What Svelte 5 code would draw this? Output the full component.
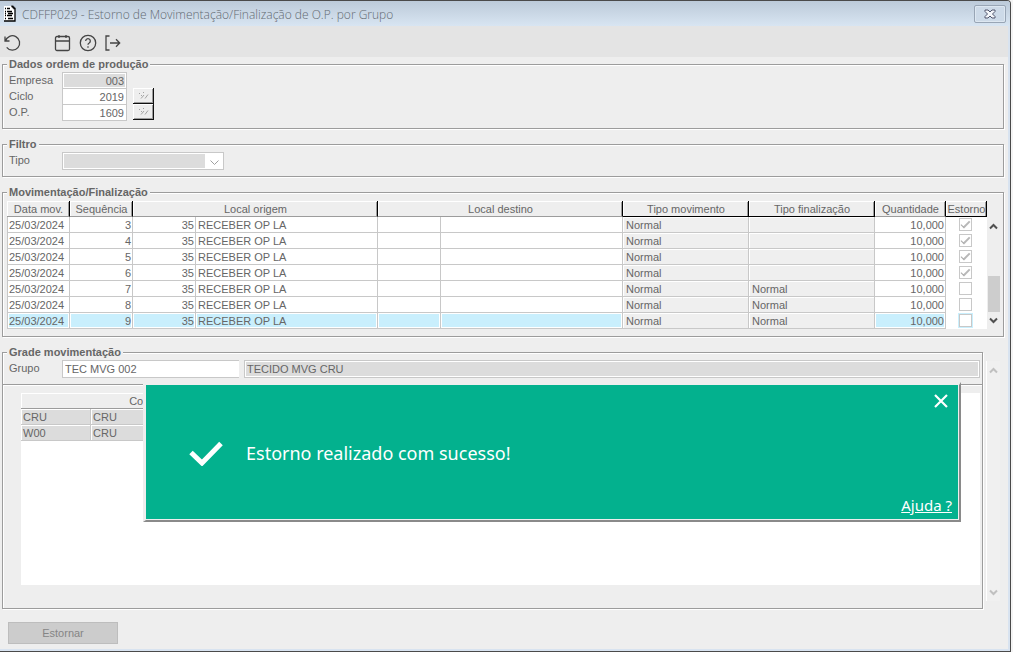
<!--
  App.svelte -- Estorno de Movimentação/Finalização de O.P. por Grupo.

  Order data, filter, movement list and the group grid, with the result
  notice on top of the grid.
-->
<script lang="ts">
  interface Movement {
    date: string;
    seq: number;
    originCode: string;
    origin: string;
    movement: string;
    ending: string;
    quantity: string;
    reversed: boolean;
  }

  const BASE = {
    date: '25/03/2024',
    originCode: '35',
    origin: 'RECEBER OP LA',
    movement: 'Normal',
    quantity: '10,000',
  };

  let movements: Movement[] = $state(
    [3, 4, 5, 6, 7, 8, 9].map((seq) => ({
      ...BASE,
      seq,
      ending: seq > 6 ? 'Normal' : '',
      reversed: seq < 7,
    }))
  );

  const COLORS = [
    { code: 'CRU', name: 'CRU' },
    { code: 'W00', name: 'CRU' },
  ];

  let selected = $state(9);
  let noticeOpen = $state(true);
  let company = $state('003');
  let cycle = $state('2019');
  let order = $state('1609');
  let group = $state('TEC MVG 002');
  let groupName = $state('TECIDO MVG CRU');
</script>

{#snippet chevron(down: boolean)}
  <svg class="chevron" class:down viewBox="0 0 9 7" width="9" height="7" aria-hidden="true">
    <path d="M1 5.5 4.500 2 8 5.500" fill="none" stroke="currentColor" stroke-width="2" />
  </svg>
{/snippet}

{#snippet lookup(label: string)}
  <button class="lookup" aria-label={label}>
    <svg viewBox="0 0 12 8" width="12" height="8" aria-hidden="true">
      <path
        d="M2 1.500h1M4 3.500h1M6 .5h1M4 6.500 7 3M8 6.500l3-4"
        fill="none"
        stroke="#a4a4a4"
        stroke-width="1"
      />
    </svg>
  </button>
{/snippet}

<main class="window">
  <header class="titlebar">
    <svg class="doc" viewBox="0 0 14 17" width="14" height="17" aria-hidden="true">
      <path d="M1 1h8l3 3v12H1z" fill="#fff" />
      <path d="M9 .5v1h1v1h1v1h1v12.500H1" fill="none" stroke="#000" stroke-width="1.300" />
      <path
        d="M2 3.500h1M4 3.500h3M2 6.500h1M4 6.500h5M2 8.500h1M5 8.500h5M2 10.500h1M4 10.500h5M2 13.500h1M5 13.500h5"
        stroke="#000"
        stroke-width="1.300"
      />
    </svg>
    <h1>CDFFP029 - Estorno de Movimentação/Finalização de O.P. por Grupo</h1>
    <button class="win-close" aria-label="Fechar janela">
      <svg viewBox="0 0 12 10" width="12" height="10" aria-hidden="true">
        <path
          d="M1 1h3l2 2 2-2h3v1.500L8.500 5 11 7.500V9H8L6 7 4 9H1V7.500L3.500 5 1 2.500z"
          fill="#f4f6fa"
          stroke="#50556c"
        />
      </svg>
    </button>
  </header>

  <nav class="toolbar">
    <button aria-label="Desfazer" class="undo">
      <svg viewBox="0 0 18 18" width="18" height="18">
        <path d="M1 2.500V7h4.500M1.500 7A7.200 7.200 0 1 1 2.700 13.300" />
      </svg>
    </button>
    <button aria-label="Calendário">
      <svg viewBox="0 0 18 18" width="18" height="18">
        <rect x="1.500" y="2.500" width="14" height="14" rx="1.500" />
        <path d="M1.500 7h14M5 1v3M12 1v3" />
      </svg>
    </button>
    <button aria-label="Ajuda">
      <svg viewBox="0 0 18 18" width="18" height="18">
        <circle cx="9" cy="9" r="7.700" />
        <path d="M6.700 7a2.300 2.300 0 1 1 3.500 2C9.300 9.500 9 9.900 9 10.700M9 12.300v1.400" />
      </svg>
    </button>
    <button aria-label="Sair">
      <svg viewBox="0 0 18 18" width="18" height="18">
        <path d="M5.500 2H2v14H5.500M6 9h10M12 5.300 15.700 9l-3.700 3.700" />
      </svg>
    </button>
  </nav>

  <div class="content">
    <fieldset class="order">
      <legend>Dados ordem de produção</legend>
      <div class="field">
        <label for="company">Empresa</label>
        <input id="company" class="num" bind:value={company} readonly />
      </div>
      <div class="field">
        <label for="cycle">Ciclo</label>
        <input id="cycle" class="num" bind:value={cycle} />
        {@render lookup('Pesquisar ciclo')}
      </div>
      <div class="field">
        <label for="order">O.P.</label>
        <input id="order" class="num" bind:value={order} />
        {@render lookup('Pesquisar O.P.')}
      </div>
    </fieldset>

    <fieldset class="filter">
      <legend>Filtro</legend>
      <div class="field">
        <label for="type">Tipo</label>
        <div class="select">
          <select id="type"><option value=""></option></select>
          <svg viewBox="0 0 9 6" width="9" height="6" aria-hidden="true">
            <path d="M0.500 0.500 4.500 4.500l4-4" fill="none" stroke="#a0a0a0" />
          </svg>
        </div>
      </div>
    </fieldset>

    <fieldset class="moves">
      <legend>Movimentação/Finalização</legend>
      <div class="list">
        <table>
          <colgroup>
            <col class="w-code" /><col class="w-code" />
            <col class="w-code" /><col />
            <col class="w-code" /><col />
            <col class="w-type" /><col class="w-type" />
            <col class="w-qty" /><col class="w-check" />
          </colgroup>
          <thead>
            <tr>
              <th>Data mov.</th>
              <th>Sequência</th>
              <th colspan="2">Local origem</th>
              <th colspan="2">Local destino</th>
              <th class="strong">Tipo movimento</th>
              <th class="strong">Tipo finalização</th>
              <th>Quantidade</th>
              <th class="strong">Estorno</th>
            </tr>
          </thead>
          <tbody>
            {#each movements as row (row.seq)}
              <tr class:selected={row.seq === selected} onclick={() => (selected = row.seq)}>
                <td class="first">{row.date}</td>
                <td class="right">{row.seq}</td>
                <td class="right">{row.originCode}</td>
                <td>{row.origin}</td>
                <td></td>
                <td></td>
                <td class="locked">{row.movement}</td>
                <td class="locked">{row.ending}</td>
                <td class="right">{row.quantity}</td>
                <td class="check">
                  <input
                    type="checkbox"
                    aria-label="Estorno {row.seq}"
                    bind:checked={row.reversed}
                  />
                </td>
              </tr>
            {/each}
          </tbody>
        </table>
        <div class="scroll dark">
          {@render chevron(false)}
          <span class="thumb"></span>
          {@render chevron(true)}
        </div>
      </div>
    </fieldset>

    <section class="grade-area">
      <fieldset class="grade">
        <legend>Grade movimentação</legend>
        <div class="field group">
          <label for="group">Grupo</label>
          <input id="group" class="code" bind:value={group} />
          <input class="name" aria-label="Descrição do grupo" bind:value={groupName} readonly />
        </div>
        <div class="sheet">
          <table class="colors">
            <thead>
              <tr><th colspan="2">Cor</th></tr>
            </thead>
            <tbody>
              {#each COLORS as color}
                <tr>
                  <td>{color.code}</td>
                  <td>{color.name}</td>
                </tr>
              {/each}
            </tbody>
          </table>
        </div>
      </fieldset>
      <div class="scroll pale">
        {@render chevron(false)}
        {@render chevron(true)}
      </div>

      {#if noticeOpen}
        <div class="notice" role="alert">
          <button class="dismiss" aria-label="Fechar" onclick={() => (noticeOpen = false)}>
            <svg viewBox="0 0 14 14" width="14" height="14" aria-hidden="true">
              <path d="M1 1l12 12M13 1 1 13" stroke="#fff" stroke-width="2.200" />
            </svg>
          </button>
          <div class="message">
            <svg viewBox="0 0 34 26" width="34" height="26" aria-hidden="true">
              <path d="M2 12.500 13 23 32 3.500" fill="none" stroke="#fff" stroke-width="5" />
            </svg>
            <p>Estorno realizado com sucesso!</p>
          </div>
          <a class="help" href="#ajuda">Ajuda ?</a>
        </div>
      {/if}
    </section>

    <button class="btn-main" disabled>Estornar</button>
  </div>
</main>

<style>
  :global(body) {
    background: #f4f4f4;
  }

  .window {
    box-sizing: border-box;
    display: flex;
    flex-direction: column;
    min-height: 100vh;
    margin-right: 2px;
    border: 1px solid #4a4a4a;
    border-left: 0;
    border-top-right-radius: 4px;
    background: #eee;
    box-shadow: inset -2px -2px 0 #d8e3f0;
    font-family: 'Liberation Sans', Arial, sans-serif;
    font-size: 11px;
    line-height: 13px;
    color: #666;
    --line: #c8c8c8;
    --edge: #9c9c9c;
  }

  button,
  input,
  select {
    box-sizing: border-box;
    margin: 0;
    padding: 0;
    border: 0;
    border-radius: 0;
    font: inherit;
    color: inherit;
  }

  .titlebar {
    display: flex;
    align-items: center;
    height: 25px;
    padding: 0 4px 0 3px;
    border-top-right-radius: 3px;
    background: linear-gradient(#bccad9, #d8e5f2);
  }

  h1 {
    flex: 1;
    margin: 2px 0 0 5px;
    font-family: 'Open Sans', 'Noto Sans', sans-serif;
    font-size: 12px;
    font-weight: 300;
    line-height: 16px;
    color: #636a72;
  }

  .win-close {
    display: grid;
    place-items: center;
    width: 32px;
    height: 18px;
    border: 1px solid #98a5b5;
    border-radius: 2px;
    background: #cddae8;
    box-shadow: inset 0 0 0 1px #dde7f1;
  }

  .toolbar {
    display: flex;
    align-items: center;
    gap: 7px;
    height: 31px;
    margin-right: 2px;
    padding: 3px 4px 0;
    box-sizing: border-box;
    background: #e4e4e4;
  }

  .toolbar button {
    display: flex;
    background: none;
  }

  .toolbar .undo {
    margin-right: 25px;
  }

  .toolbar svg {
    fill: none;
    stroke: #444;
    stroke-width: 1.3;
  }

  .content {
    flex: 1;
    display: flex;
    flex-direction: column;
    gap: 9px;
    padding: 1px 6px 7px 2px;
  }

  fieldset {
    box-sizing: border-box;
    min-width: 0;
    margin: 0;
    padding: 0;
    border: 1px solid var(--edge);
    box-shadow: 1px 1px 0 #fff, inset 1px 1px 0 #fff;
  }

  legend {
    margin-left: 4px;
    padding: 0 2px;
    background: #eee;
    font-weight: 700;
    font-size: 11px;
    line-height: 13px;
  }

  .field {
    display: flex;
    height: 16px;
    padding-left: 6px;
  }

  .field label {
    width: 53px;
    padding-top: 2px;
  }

  .field input {
    height: 17px;
    padding: 1px 2px 0;
    border: 1px solid var(--line);
    background: #fff;
  }

  .field input:read-only {
    background: #dcdcdc;
    box-shadow: inset 0 0 0 1px #fff;
  }

  .num {
    width: 65px;
    text-align: right;
  }

  .order {
    padding: 1px 0 8px;
  }

  .lookup {
    display: grid;
    place-items: center;
    width: 21px;
    height: 16px;
    margin-left: 6px;
    border-right: 1px solid #111;
    border-bottom: 1px solid #111;
    background: #eee;
    box-shadow: inset 1px 1px 0 #fff, inset -1px -1px 0 var(--edge);
  }

  .filter {
    padding: 1px 0 8px;
  }

  .select {
    position: relative;
    width: 162px;
    height: 18px;
  }

  .select select {
    appearance: none;
    width: 100%;
    height: 100%;
    border: 1px solid var(--line);
    background: linear-gradient(#dcdcdc, #dcdcdc) 1px 1px / 141px 14px no-repeat #fff;
  }

  .select svg {
    position: absolute;
    right: 5px;
    top: 8px;
    pointer-events: none;
  }

  .moves {
    padding: 2px 0 7px;
  }

  .list {
    display: flex;
    margin: 0 3px 0 4px;
  }

  table {
    table-layout: fixed;
    border-spacing: 0;
  }

  .list table {
    flex: 1;
    width: 0;
  }

  .w-code {
    width: 63px;
  }

  .w-type {
    width: 126px;
  }

  .w-qty {
    width: 71px;
  }

  .w-check {
    width: 41px;
  }

  th {
    height: 16px;
    box-sizing: border-box;
    padding: 1px 0 0 1px;
    border-right: 1px solid #000;
    border-bottom: 1px solid var(--edge);
    box-shadow: inset 1px 1px 0 #fff, inset -1px 0 0 var(--edge);
    font-weight: 400;
    text-align: center;
    white-space: nowrap;
  }

  th.strong {
    border-bottom-color: #000;
  }

  td {
    height: 16px;
    box-sizing: border-box;
    padding: 1px 2px 0;
    border-right: 1px solid var(--line);
    border-bottom: 1px solid var(--line);
    background: #fff;
    line-height: 13px;
    white-space: nowrap;
  }

  td.first {
    border-left: 1px solid var(--line);
    padding-left: 1px;
  }

  td.right {
    padding-right: 1px;
    text-align: right;
  }

  td.locked {
    padding-left: 3px;
    background: #efefef;
    box-shadow: inset 1px 1px 0 #fff;
  }

  .selected td:not(.locked, .check) {
    background: #c9effd;
    box-shadow: inset 0 0 0 1px #fff;
  }

  td.check {
    padding: 0 2px 2px 0;
    border: 0;
    text-align: center;
    line-height: 0;
  }

  .check input {
    appearance: none;
    position: relative;
    width: 13px;
    height: 13px;
    border: 1px solid var(--line);
    background: #fff;
    vertical-align: middle;
  }

  .check input:checked::after {
    content: '';
    position: absolute;
    left: 1px;
    top: 2px;
    width: 9px;
    height: 5px;
    border-left: 1px solid #aaa;
    border-bottom: 2px solid #b8b8b8;
    box-sizing: border-box;
    transform: rotate(-45deg);
  }

  .selected .check input {
    box-shadow: 0 0 0 1px #c9effd;
  }

  .scroll {
    display: flex;
    flex-direction: column;
    justify-content: space-between;
    align-items: center;
    width: 13px;
  }

  .scroll.dark {
    margin-top: 16px;
    padding: 6px 0 5px;
    box-sizing: border-box;
    color: #505050;
  }

  .scroll.pale {
    margin: 15px 4px 8px 3px;
    padding: 6px 0 5px;
    border-left: 1px solid #fff;
    background: #f0f0f0;
    color: #c0c0c0;
  }

  .chevron.down {
    transform: rotate(180deg);
  }

  .thumb {
    width: 12px;
    height: 36px;
    margin: 41px 0 0 1px;
    background: #cdcdcd;
  }

  .grade-area {
    position: relative;
    flex: 1;
    display: flex;
  }

  .grade {
    flex: 1;
    display: flex;
    flex-direction: column;
  }

  .group {
    height: 24px;
    padding: 1px 2px 0 6px;
    border-bottom: 1px solid var(--edge);
    box-shadow: 0 1px 0 #fff;
  }

  .group label {
    padding-top: 2px;
  }

  .group .code {
    width: 177px;
    border-right: 0;
  }

  .group .name {
    flex: 1;
    margin-left: 5px;
  }

  .group input {
    height: 18px;
    padding-top: 0;
  }

  .sheet {
    flex: 1;
    margin: 8px 2px 23px 18px;
    background: #fff;
  }

  .colors {
    table-layout: auto;
    width: 234px;
    background: #eee;
  }

  .colors th {
    border-right-color: var(--line);
  }

  .colors td {
    background: #dcdcdc;
    box-shadow: inset 1px 1px 0 #fff;
  }

  .colors td:first-child {
    width: 70px;
  }

  .notice {
    position: absolute;
    left: 141px;
    right: 43px;
    top: 36px;
    height: 140px;
    box-sizing: border-box;
    border: 3px solid #eee;
    border-right: 2px solid #8a8a8a;
    border-bottom: 2px solid #8a8a8a;
    background: #03b18e;
    box-shadow: inset -1px -1px 0 #eee;
    color: #fff;
    font-family: 'Noto Sans', 'Open Sans', sans-serif;
  }

  .dismiss {
    position: absolute;
    right: 11px;
    top: 9px;
    display: flex;
    background: none;
  }

  .message {
    display: flex;
    align-items: center;
    gap: 23px;
    height: 100%;
    padding-left: 43px;
  }

  .message p {
    margin: 0;
    font-size: 18px;
    line-height: 24px;
  }

  .help {
    position: absolute;
    right: 7px;
    bottom: 5px;
    color: #fff;
    font-size: 15px;
    line-height: 20px;
  }

  .btn-main {
    align-self: flex-start;
    width: 110px;
    height: 22px;
    margin: 4px 0 0 6px;
    border: 1px solid #bdbdbd;
    background: #ccc;
    color: #858585;
  }
</style>
